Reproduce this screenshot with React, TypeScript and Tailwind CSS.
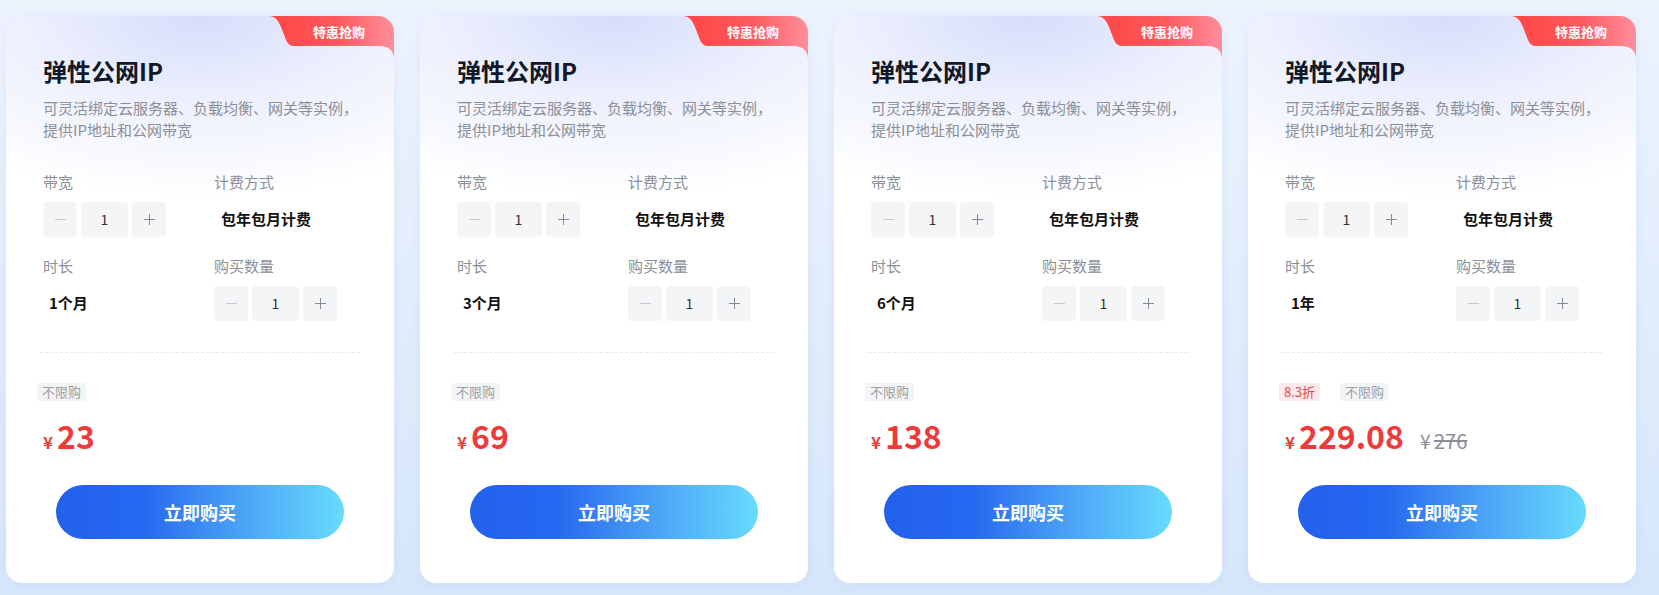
import React from 'react';

type Plan = {
  duration: string;
  price: string;
  discount?: string;
  original?: string;
};

const plans: Plan[] = [
  { duration: '1个月', price: '23' },
  { duration: '3个月', price: '69' },
  { duration: '6个月', price: '138' },
  { duration: '1年', price: '229.08', discount: '8.3折', original: '276' },
];

const Ribbon = () => (
  <div className="absolute top-0 right-0 w-[125px] h-[44px]">
    <svg width="125" height="44" viewBox="0 0 125 44" className="absolute inset-0">
      <defs>
        <linearGradient id="rib" x1="0" y1="0" x2="1" y2="0">
          <stop offset="0" stopColor="#ff4545" />
          <stop offset="0.55" stopColor="#ff5a5e" />
          <stop offset="1" stopColor="#ff8e9b" />
        </linearGradient>
      </defs>
      <path
        d="M0 0 H125 V44 Q125 30 110 30 H26 C21 30 19 28 17 24 L12 11 C9 4 6 0 0 0 Z"
        fill="url(#rib)"
      />
    </svg>
    <span className="absolute left-[44px] top-[6px] text-[13px] leading-[20px] font-bold text-white">特惠抢购</span>
  </div>
);

const Stepper = () => (
  <div className="flex gap-[4px] h-[35px]">
    <button className="w-[34px] h-full rounded-[4px] bg-[#f4f5f7] flex items-center justify-center">
      <span className="block w-[11px] h-[1px] bg-[#c7cad1]" />
    </button>
    <div className="w-[47px] h-full rounded-[4px] bg-[#f4f5f7] flex items-center justify-center text-[14px] text-[#333]">
      1
    </div>
    <button className="w-[34px] h-full rounded-[4px] bg-[#f4f5f7] flex items-center justify-center relative">
      <span className="block w-[11px] h-[1px] bg-[#858a94]" />
      <span className="absolute block w-[1px] h-[11px] bg-[#858a94]" />
    </button>
  </div>
);

const Card = ({ plan }: { plan: Plan }) => (
  <div className="relative w-[388px] shrink-0 rounded-[16px] overflow-hidden bg-white bg-[radial-gradient(95%_32%_at_50%_0%,#d7ddfb_0%,#eceffd_45%,#ffffff_100%)] shadow-[0_2px_12px_rgba(70,110,190,0.06)] pl-[37px] pr-[34px] pt-[39px] pb-[44px]">
    <Ribbon />
    <h3 className="text-[24px] leading-[32px] font-bold text-[#111827]">弹性公网IP</h3>
    <p className="mt-[10px] text-[15px] leading-[22px] text-[#8b8f98]">
      可灵活绑定云服务器、负载均衡、网关等实例，
      <br />
      提供IP地址和公网带宽
    </p>

    <div className="mt-[30px] grid grid-cols-[171px_1fr]">
      <div>
        <div className="text-[15px] leading-[22px] text-[#8b8f98]">带宽</div>
        <div className="mt-[9px]">
          <Stepper />
        </div>
      </div>
      <div>
        <div className="text-[15px] leading-[22px] text-[#8b8f98]">计费方式</div>
        <div className="mt-[9px] h-[35px] flex items-center pl-[7px] text-[15px] font-bold text-[#111]">包年包月计费</div>
      </div>
      <div className="mt-[18px]">
        <div className="text-[15px] leading-[22px] text-[#8b8f98]">时长</div>
        <div className="mt-[9px] h-[35px] flex items-center pl-[6px] text-[15px] font-bold text-[#111]">{plan.duration}</div>
      </div>
      <div className="mt-[18px]">
        <div className="text-[15px] leading-[22px] text-[#8b8f98]">购买数量</div>
        <div className="mt-[9px]">
          <Stepper />
        </div>
      </div>
    </div>

    <div className="mt-[31px] -ml-[3px] border-t border-dashed border-[#e8eaee]" />

    <div className="mt-[30px] -ml-[6px] flex gap-[20px]">
      {plan.discount && (
        <span className="h-[18px] px-[5px] rounded-[3px] bg-[#fde9eb] text-[13px] leading-[18px] text-[#e5484d]">
          {plan.discount}
        </span>
      )}
      <span className="h-[18px] px-[5px] rounded-[3px] bg-[#f3f4f5] text-[13px] leading-[18px] text-[#9a9da4]">不限购</span>
    </div>

    <div className="mt-[14px] flex items-baseline h-[40px]">
      <span className="text-[17px] font-bold text-[#ef3a3a] mr-[4px]">¥</span>
      <span className="text-[32px] leading-[40px] font-bold text-[#ef3a3a]">{plan.price}</span>
      {plan.original && (
        <span className="ml-[16px] text-[20px] text-[#8b8e95]">
          <span className="mr-[3px]">¥</span>
          <span className="line-through">{plan.original}</span>
        </span>
      )}
    </div>

    <div className="mt-[30px] -ml-[37px] -mr-[34px] flex justify-center">
      <button className="w-[288px] h-[54px] rounded-full bg-[linear-gradient(90deg,#2361ec_0%,#2668ef_30%,#4ba4f6_65%,#67dbfd_100%)] text-white text-[18px] font-bold">
        立即购买
      </button>
    </div>
  </div>
);

export default function App() {
  return (
    <div className="w-full h-[595px] overflow-hidden bg-[linear-gradient(180deg,#edf3fd_0%,#d6e6fb_100%)] font-['Noto_Sans_CJK_SC','Noto_Sans',sans-serif]">
      <div className="flex gap-[26px] pl-[6px] pt-[16px]">
        {plans.map((p) => (
          <Card key={p.duration} plan={p} />
        ))}
      </div>
    </div>
  );
}
